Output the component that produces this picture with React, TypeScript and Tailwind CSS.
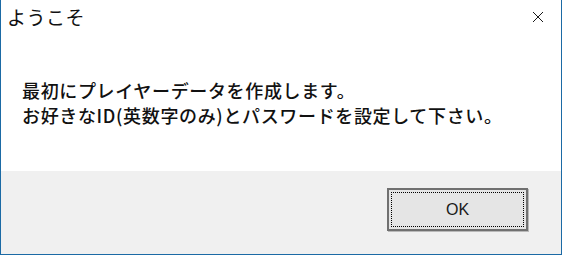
import React from 'react';

const CloseIcon: React.FC = () => (
  <svg width="12" height="12" viewBox="0 0 12 12" className="block">
    <path d="M1 1 L11 11 M11 1 L1 11" stroke="#1a1a1a" strokeWidth="1" fill="none" />
  </svg>
);

const App: React.FC = () => {
  return (
    <div
      className="w-[562px] h-[255px] bg-white border-x border-b border-[#1b6aa5] flex flex-col text-[#111]"
      style={{ fontFamily: '"Noto Sans CJK JP", "Noto Sans", sans-serif' }}
    >
      <div className="h-[33px] flex items-center justify-between pl-[6px] pr-[17px]">
        <span className="text-[19px] leading-none tracking-[0.5px]">ようこそ</span>
        <CloseIcon />
      </div>
      <div className="h-[138px] pt-[45px] pl-[21px] text-[18px] leading-[25px] font-medium tracking-[0.65px]">
        <p>最初にプレイヤーデータを作成します。</p>
        <p>お好きなID(英数字のみ)とパスワードを設定して下さい。</p>
      </div>
      <div className="flex-1 bg-[#f0f0f0] flex justify-end items-start pt-[17px] pr-[33px]">
        <button className="w-[141px] h-[43px] border-2 border-[#707070] bg-[#e5e5e5] p-[2px] shadow-[1px_1px_0_#b9b9b9]">
          <div className="w-full h-full border border-dotted border-black flex items-center justify-center">
            <span
              className="text-[16px] text-[#1a1a1a]"
              style={{ fontFamily: '"Liberation Sans", Arial, sans-serif' }}
            >
              OK
            </span>
          </div>
        </button>
      </div>
    </div>
  );
};

export default App;
